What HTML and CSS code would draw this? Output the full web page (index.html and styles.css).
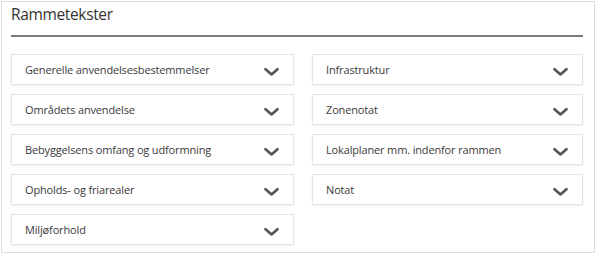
FILE: index.html
```html
<!DOCTYPE html>
<html lang="da">
<head>
<meta charset="utf-8">
<link rel="stylesheet" href="styles.css">
</head>
<body>
<section class="panel">
  <h2 class="panel-title">Rammetekster</h2>
  <div class="grid">
    <div class="col col-left">
      <div class="item"><span>Generelle anvendelsesbestemmelser</span><svg class="chev" viewBox="0 0 15 8"><path d="M1.5 1.2 L7.5 6.5 L13.5 1.2"/></svg></div>
      <div class="item"><span>Områdets anvendelse</span><svg class="chev" viewBox="0 0 15 8"><path d="M1.5 1.2 L7.5 6.5 L13.5 1.2"/></svg></div>
      <div class="item"><span>Bebyggelsens omfang og udformning</span><svg class="chev" viewBox="0 0 15 8"><path d="M1.5 1.2 L7.5 6.5 L13.5 1.2"/></svg></div>
      <div class="item"><span>Opholds- og friarealer</span><svg class="chev" viewBox="0 0 15 8"><path d="M1.5 1.2 L7.5 6.5 L13.5 1.2"/></svg></div>
      <div class="item"><span>Miljøforhold</span><svg class="chev" viewBox="0 0 15 8"><path d="M1.5 1.2 L7.5 6.5 L13.5 1.2"/></svg></div>
    </div>
    <div class="col col-right">
      <div class="item"><span>Infrastruktur</span><svg class="chev" viewBox="0 0 15 8"><path d="M1.5 1.2 L7.5 6.5 L13.5 1.2"/></svg></div>
      <div class="item"><span>Zonenotat</span><svg class="chev" viewBox="0 0 15 8"><path d="M1.5 1.2 L7.5 6.5 L13.5 1.2"/></svg></div>
      <div class="item"><span>Lokalplaner mm. indenfor rammen</span><svg class="chev" viewBox="0 0 15 8"><path d="M1.5 1.2 L7.5 6.5 L13.5 1.2"/></svg></div>
      <div class="item"><span>Notat</span><svg class="chev" viewBox="0 0 15 8"><path d="M1.5 1.2 L7.5 6.5 L13.5 1.2"/></svg></div>
    </div>
  </div>
</section>
</body>
</html>
```
FILE: styles.css
```css
* { box-sizing: border-box; }
html, body { margin: 0; padding: 0; background: #fff; }
body { font-family: "Open Sans", "Noto Sans", sans-serif; color: #333; }
.panel {
  width: 594px;
  height: 252px;
  margin: 1px 0 0 1px;
  border: 1px solid #dcdcdc;
  padding: 2px 11px 0 9px;
}
.panel-title {
  margin: 0;
  font-weight: 400;
  font-size: 15.5px;
  letter-spacing: -0.35px;
  line-height: 20px;
  padding-bottom: 11px;
  border-bottom: 2px solid #7a7a7a;
  color: #333;
}
.grid {
  display: grid;
  grid-template-columns: 283px 271px;
  column-gap: 18px;
  margin-top: 17px;
}
.col { display: flex; flex-direction: column; gap: 9px; }
.item {
  height: 31px;
  border: 1px solid #e4e4e4;
  box-shadow: 0 1px 2px rgba(0,0,0,0.07);
  display: flex;
  align-items: center;
  justify-content: space-between;
  padding: 0 14px 0 13px;
  font-size: 11px;
  letter-spacing: -0.15px;
  color: #3a3a3a;
}
.item span { margin-top: -1px; }
.chev {
  width: 15px;
  height: 8px;
  margin-top: 4px;
  fill: none;
  stroke: #555;
  stroke-width: 2.6;
  stroke-linecap: round;
  stroke-linejoin: round;
}
```
